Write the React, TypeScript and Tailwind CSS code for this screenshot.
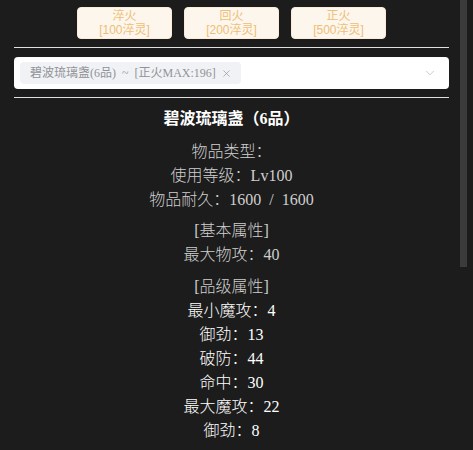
import { ChevronDown, X } from "lucide-react";

const SERIF = "font-['Liberation_Serif','Noto_Sans_CJK_SC',serif]";

const refineButtons = [
  { name: "淬火", cost: "[100淬灵]" },
  { name: "回火", cost: "[200淬灵]" },
  { name: "正火", cost: "[500淬灵]" },
];

const gradeAttrs = [
  "最小魔攻：4",
  "御劲：13",
  "破防：44",
  "命中：30",
  "最大魔攻：22",
  "御劲：8",
];

export default function App() {
  return (
    <div className="relative w-[473px] h-[450px] overflow-hidden bg-[#1c1c1c]">
      <div className="pl-[14px] pr-[24px] pt-[7px]">
        <div className="flex justify-center gap-[12px]">
          {refineButtons.map((b) => (
            <button
              key={b.name}
              className="w-[95px] h-[32px] rounded-[4px] bg-[#fdf6ec] border border-[#faecd8] flex flex-col items-center justify-center text-[12px] leading-[14px] text-[#eebe77] font-['Liberation_Sans','Noto_Sans_CJK_SC',sans-serif]"
            >
              <span>{b.name}</span>
              <span>{b.cost}</span>
            </button>
          ))}
        </div>

        <div className="h-px bg-[#e0e0e0] mt-[8px]" />

        <div className="mt-[9px] h-[32px] bg-white rounded-[4px] flex items-center pl-[6px] pr-[12px]">
          <span
            className={`h-[22px] pl-[10px] pr-[9px] rounded-[4px] bg-[#f0f2f5] text-[#909399] text-[12px] [word-spacing:3px] flex items-center gap-[5px] ${SERIF}`}
          >
            碧波琉璃盏(6品) ~ [正火MAX:196]
            <X className="w-[11px] h-[11px]" strokeWidth={1.5} />
          </span>
          <ChevronDown className="ml-auto w-[14px] h-[14px] text-[#c0c4cc]" strokeWidth={1.5} />
        </div>

        <div className="h-px bg-[#e0e0e0] mt-[8px]" />

        <div className={`mt-[9px] text-center text-[16px] leading-[24px] [word-spacing:4px] text-[#cfcfcf] font-light ${SERIF}`}>
          <div className="font-bold text-white">碧波琉璃盏（6品）</div>

          <div className="mt-[9px]">
            <div>物品类型：</div>
            <div>使用等级：Lv100</div>
            <div>物品耐久：1600 / 1600</div>
          </div>

          <div className="mt-[7px]">
            <div>[基本属性]</div>
            <div>最大物攻：40</div>
          </div>

          <div className="mt-[8px]">
            <div>[品级属性]</div>
            {gradeAttrs.map((a, i) => (
              <div key={i} className="text-white">
                {a}
              </div>
            ))}
          </div>
        </div>
      </div>

      {/* scrollbar thumb */}
      <div className="absolute left-[460px] top-0 w-[7px] h-[267px] bg-[#3b3b3b]" />
    </div>
  );
}
